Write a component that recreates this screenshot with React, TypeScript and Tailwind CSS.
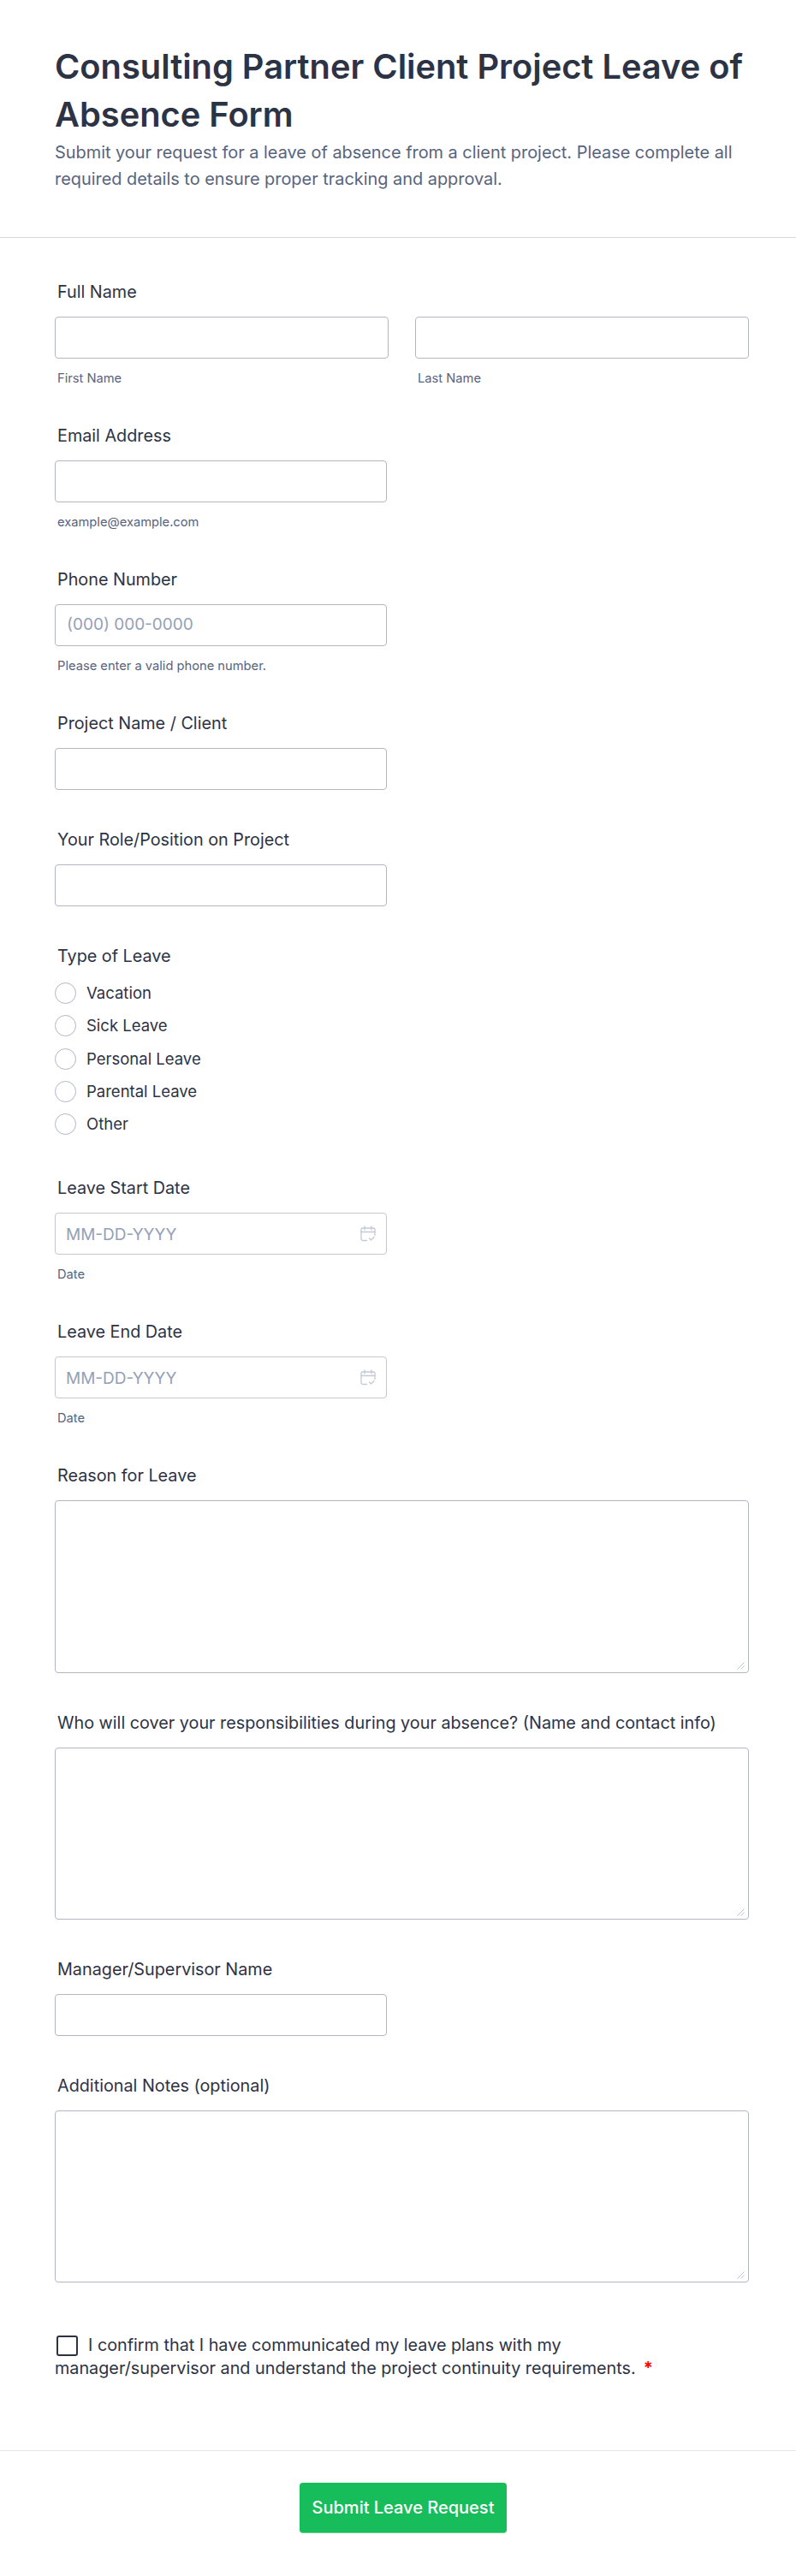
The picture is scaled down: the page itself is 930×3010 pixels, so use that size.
import React from "react";

const labelCls = "block pt-[2px] text-[19.8px] leading-[22px] font-normal text-[#2c3345] pl-[3px]";
const inputCls = "h-[49px] rounded-[4px] border border-[#b0b6c6] bg-white";
const dateCls = "h-[49px] rounded-[4px] border border-[#c4c8d3] bg-white";
const subCls = "mt-[13px] h-[19px] pl-[3px] text-[14.7px] leading-[20px] text-[#57647e]";

function Label({ children }: { children: React.ReactNode }) {
  return <div className={labelCls}>{children}</div>;
}

function TextField({ label, sub, placeholder }: { label: string; sub?: string; placeholder?: string }) {
  return (
    <div className="mb-[45px]">
      <Label>{label}</Label>
      <div className={`${inputCls} mt-[18px] w-[388px] flex items-center pl-[13px] text-[19px] text-[#94a0b8]`}>{placeholder}</div>
      {sub && <div className={subCls}>{sub}</div>}
    </div>
  );
}

function DateField({ label }: { label: string }) {
  return (
    <div className="mb-[45px]">
      <Label>{label}</Label>
      <div className={`${dateCls} mt-[18px] w-[388px] flex items-center justify-between pl-[12px] pr-[12px] text-[19px] text-[#94a0b8]`}>
        <span className="pt-[3px]">MM-DD-YYYY</span>
        <svg width="18" height="19" viewBox="0 0 18 19" fill="none" stroke="#c3c9d6" strokeWidth="1.3" strokeLinecap="round" strokeLinejoin="round">
          <path d="M7.500 17.500H3A2 2 0 0 1 1 15.500V5A2 2 0 0 1 3 3h12A2 2 0 0 1 17 5v6.500" />
          <path d="M1 7.500h16M5 1v4M13 1v4" />
          <path d="M10.500 15l2 2 3.500-3.500" />
        </svg>
      </div>
      <div className={subCls}>Date</div>
    </div>
  );
}

function AreaField({ label, tall }: { label: string; tall?: boolean }) {
  return (
    <div className="mb-[45px]">
      <Label>{label}</Label>
      <div className={`relative mt-[18px] ${tall ? "h-[202px]" : "h-[201px]"} w-[811px] rounded-[4px] border border-[#b0b6c6] bg-white`}>
        <svg className="absolute right-[4px] bottom-[3px]" width="9" height="9" viewBox="0 0 9 9" fill="none" stroke="#bcc1ce" strokeWidth="1">
          <path d="M0.500 8.500L8.500 0.500M4.500 8.500L8.500 4.500" />
        </svg>
      </div>
    </div>
  );
}

const options = ["Vacation", "Sick Leave", "Personal Leave", "Parental Leave", "Other"];

export default function App() {
  return (
    <div className="w-[930px] h-[3010px] bg-white overflow-hidden" style={{ fontFamily: "Inter, sans-serif" }}>
      <header className="h-[278px] border-b border-[#d6d9e3] pl-[64px] pr-[55px] pt-[50px]">
        <h1 className="text-[39.8px] leading-[56px] font-semibold text-[#2c3345]">Consulting Partner Client Project Leave of Absence Form</h1>
        <p className="mt-[1px] text-[19.9px] leading-[31px] text-[#57647e]">Submit your request for a leave of absence from a client project. Please complete all required details to ensure proper tracking and approval.</p>
      </header>
      <main className="pl-[64px] pr-[55px] pt-[50px] flex flex-col">
        <div className="mb-[45px]">
          <Label>Full Name</Label>
          <div className="mt-[18px] flex gap-[31px]">
            <div className="w-[390px]">
              <div className={inputCls} />
              <div className={subCls}>First Name</div>
            </div>
            <div className="w-[390px]">
              <div className={inputCls} />
              <div className={subCls}>Last Name</div>
            </div>
          </div>
        </div>
        <TextField label="Email Address" sub="example@example.com" />
        <TextField label="Phone Number" placeholder="(000) 000-0000" sub="Please enter a valid phone number." />
        <TextField label="Project Name / Client" />
        <TextField label="Your Role/Position on Project" />
        <div className="mb-[49px]">
          <Label>Type of Leave</Label>
          <div className="mt-[20px] flex flex-col gap-[13.3px]">
            {options.map((o) => (
              <div key={o} className="flex items-center gap-[12px] h-[25px]">
                <span className="block w-[25px] h-[25px] rounded-full border border-[#b0b6c6] bg-white" />
                <span className="text-[18.5px] leading-[25px] text-[#2c3345]">{o}</span>
              </div>
            ))}
          </div>
        </div>
        <DateField label="Leave Start Date" />
        <DateField label="Leave End Date" />
        <AreaField label="Reason for Leave" tall />
        <AreaField label="Who will cover your responsibilities during your absence? (Name and contact info)" />
        <TextField label="Manager/Supervisor Name" />
        <AreaField label="Additional Notes (optional)" />
        <p className="mt-[15px] max-w-[730px] text-[19.8px] leading-[27px] text-[#2c3345]">
          <span className="inline-block align-[-6px] w-[25px] h-[24px] ml-[2px] mr-[12px] rounded-[3px] border-2 border-[#2c3345] bg-white" />
          I confirm that I have communicated my leave plans with my manager/supervisor and understand the project continuity requirements.
          <span className="ml-[9px] font-bold text-[#f00]">*</span>
        </p>
      </main>
      <footer className="mt-[82px] border-t border-[#e3e6ee] flex justify-center pt-[37px] pl-[12px]">
        <div className="h-[59px] w-[242px] rounded-[4px] border-b border-[#5ed08c] bg-[#18bd5b] flex items-center justify-center text-[20px] font-medium text-white">Submit Leave Request</div>
      </footer>
    </div>
  );
}
